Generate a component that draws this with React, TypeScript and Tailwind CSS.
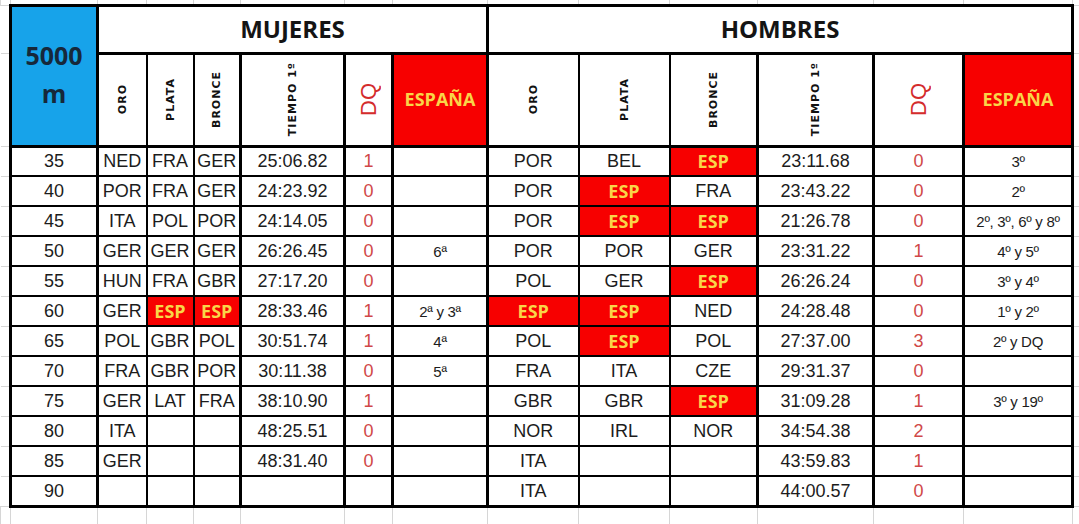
import React from 'react';

type Row = {
  age: string;
  w: [string, string, string, string, string, string];
  m: [string, string, string, string, string, string];
};

const rows: Row[] = [
  { age: '35', w: ['NED', 'FRA', 'GER', '25:06.82', '1', ''], m: ['POR', 'BEL', 'ESP', '23:11.68', '0', '3º'] },
  { age: '40', w: ['POR', 'FRA', 'GER', '24:23.92', '0', ''], m: ['POR', 'ESP', 'FRA', '23:43.22', '0', '2º'] },
  { age: '45', w: ['ITA', 'POL', 'POR', '24:14.05', '0', ''], m: ['POR', 'ESP', 'ESP', '21:26.78', '0', '2º, 3º, 6º y 8º'] },
  { age: '50', w: ['GER', 'GER', 'GER', '26:26.45', '0', '6ª'], m: ['POR', 'POR', 'GER', '23:31.22', '1', '4º y 5º'] },
  { age: '55', w: ['HUN', 'FRA', 'GBR', '27:17.20', '0', ''], m: ['POL', 'GER', 'ESP', '26:26.24', '0', '3º y 4º'] },
  { age: '60', w: ['GER', 'ESP', 'ESP', '28:33.46', '1', '2ª y 3ª'], m: ['ESP', 'ESP', 'NED', '24:28.48', '0', '1º y 2º'] },
  { age: '65', w: ['POL', 'GBR', 'POL', '30:51.74', '1', '4ª'], m: ['POL', 'ESP', 'POL', '27:37.00', '3', '2º y DQ'] },
  { age: '70', w: ['FRA', 'GBR', 'POR', '30:11.38', '0', '5ª'], m: ['FRA', 'ITA', 'CZE', '29:31.37', '0', ''] },
  { age: '75', w: ['GER', 'LAT', 'FRA', '38:10.90', '1', ''], m: ['GBR', 'GBR', 'ESP', '31:09.28', '1', '3º y 19º'] },
  { age: '80', w: ['ITA', '', '', '48:25.51', '0', ''], m: ['NOR', 'IRL', 'NOR', '34:54.38', '2', ''] },
  { age: '85', w: ['GER', '', '', '48:31.40', '0', ''], m: ['ITA', '', '', '43:59.83', '1', ''] },
  { age: '90', w: ['', '', '', '', '', ''], m: ['ITA', '', '', '44:00.57', '0', ''] },
];

// column widths: spacer, 5000, women x6, men x6, spacer
const widths = [10, 87, 49, 47, 47, 104, 48, 95, 91, 91, 88, 116, 90, 109, 7];

// side borders per column inside a group (ORO, PLATA, BRONCE, TIEMPO, DQ, ESPAÑA)
const side = [
  'border-l-[3px] border-r-2',
  'border-l-2 border-r-2',
  'border-l-2 border-r-[3px]',
  'border-l-[3px] border-r-[3px]',
  'border-l-[3px] border-r-[3px]',
  'border-l-[3px] border-r-[3px]',
];

const grid = 'border-[#d6d6d6]';

function VerticalLabel({ text }: { text: string }) {
  return (
    <div className="flex h-full items-center justify-center">
      <span className="rotate-180 font-['DejaVu_Sans',sans-serif] text-[11px] font-bold leading-none tracking-[1px] text-[#111] [writing-mode:vertical-rl]">
        {text}
      </span>
    </div>
  );
}

function SubHeaders() {
  const labels = ['ORO', 'PLATA', 'BRONCE', 'TIEMPO 1º'];
  return (
    <>
      {labels.map((l, i) => (
        <td key={l} className={`border-y-[3px] border-black bg-white p-0 ${side[i]}`}>
          <VerticalLabel text={l} />
        </td>
      ))}
      <td className={`border-y-[3px] border-black bg-white p-0 ${side[4]}`}>
        <div className="flex h-full items-center justify-center">
          <span className="rotate-180 text-[22px] leading-none text-[#d42c2c] [writing-mode:vertical-rl]">DQ</span>
        </div>
      </td>
      <td className={`border-y-[3px] border-black bg-[#f70000] p-0 text-center ${side[5]}`}>
        <span className="font-['Open_Sans',sans-serif] text-[18px] font-bold text-[#f9d548]">ESPAÑA</span>
      </td>
    </>
  );
}

function DataCells({ vals, last }: { vals: string[]; last: boolean }) {
  return (
    <>
      {vals.map((v, i) => {
        const esp = v === 'ESP';
        const bb = last ? 'border-b-[3px]' : 'border-b-2';
        let txt = 'text-[18px] text-[#1c1c1c]';
        if (i === 4) txt = 'text-[18px] text-[#d04848]';
        if (i === 5) txt = 'text-[15px] text-[#1c1c1c] tracking-[-0.3px]';
        if (esp) txt = 'text-[18px] font-bold text-[#f9d548] font-["Open_Sans",sans-serif]';
        return (
          <td
            key={i}
            className={`border-t-2 ${bb} border-black p-0 text-center leading-none whitespace-nowrap ${side[i]} ${esp ? 'bg-[#f70000]' : 'bg-white'} ${txt}`}
          >
            {v}
          </td>
        );
      })}
    </>
  );
}

export default function App() {
  return (
    <div
      className="h-[524px] w-[1079px] overflow-hidden bg-white"
      style={{ fontFamily: '"Liberation Sans", Arial, sans-serif' }}
    >
      <table className="w-[1079px] table-fixed border-collapse">
        <colgroup>
          {widths.map((w, i) => (
            <col key={i} style={{ width: w }} />
          ))}
        </colgroup>
        <tbody>
          {/* spreadsheet grid above the table */}
          <tr className="h-[5px]">
            {widths.map((_, i) => (
              <td key={i} className={`border-x ${grid} p-0`} />
            ))}
          </tr>
          <tr className="h-[48px]">
            <td className={`border-y ${grid} p-0`} />
            <td
              rowSpan={2}
              className="border-[3px] border-black bg-[#17a3ea] p-0 pb-1 text-center font-['Open_Sans',sans-serif] text-[25px] leading-[38px] font-bold text-[#16283a]"
            >
              5000
              <br />m
            </td>
            <td colSpan={6} className="border-[3px] border-black bg-white p-0 text-center">
              <span className="font-['Open_Sans',sans-serif] text-[24px] font-bold text-[#141414]">MUJERES</span>
            </td>
            <td colSpan={6} className="border-[3px] border-black bg-white p-0 text-center">
              <span className="font-['Open_Sans',sans-serif] text-[24px] font-bold text-[#141414]">HOMBRES</span>
            </td>
            <td className={`border-y ${grid} p-0`} />
          </tr>
          <tr className="h-[93px]">
            <td className={`border-y ${grid} p-0`} />
            <SubHeaders />
            <SubHeaders />
            <td className={`border-y ${grid} p-0`} />
          </tr>
          {rows.map((r, idx) => {
            const last = idx === rows.length - 1;
            return (
              <tr key={r.age} className="h-[30px]">
                <td className={`border-y ${grid} p-0`} />
                <td
                  className={`border-x-[3px] border-t-2 ${last ? 'border-b-[3px]' : 'border-b-2'} border-black bg-white p-0 text-center text-[18px] leading-none text-[#1c1c1c]`}
                >
                  {r.age}
                </td>
                <DataCells vals={r.w} last={last} />
                <DataCells vals={r.m} last={last} />
                <td className={`border-y ${grid} p-0`} />
              </tr>
            );
          })}
          {/* spreadsheet grid below the table */}
          <tr className="h-[18px]">
            {widths.map((_, i) => (
              <td key={i} className={`border-x ${grid} p-0`} />
            ))}
          </tr>
        </tbody>
      </table>
    </div>
  );
}
